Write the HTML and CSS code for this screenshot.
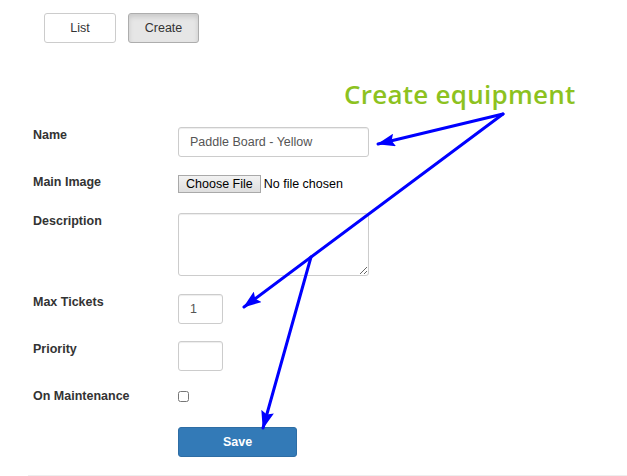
FILE: index.html
```html
<!DOCTYPE html>
<html>
<head>
<meta charset="utf-8">
<link rel="stylesheet" href="styles.css">
</head>
<body>
<div class="page">
  <div class="tabs">
    <button class="btn">List</button>
    <button class="btn btn-active">Create</button>
  </div>
  <form class="form">
    <div class="row row-name">
      <label class="lbl">Name</label>
      <input class="ctl ctl-wide" type="text" value="Paddle Board - Yellow">
    </div>
    <div class="row row-file">
      <label class="lbl">Main Image</label>
      <input class="file" type="file">
    </div>
    <div class="row row-desc">
      <label class="lbl">Description</label>
      <textarea class="ctl ctl-wide ctl-area"></textarea>
    </div>
    <div class="row row-max">
      <label class="lbl">Max Tickets</label>
      <input class="ctl ctl-small" type="text" value="1">
    </div>
    <div class="row row-prio">
      <label class="lbl">Priority</label>
      <input class="ctl ctl-small" type="text" value="">
    </div>
    <div class="row row-maint">
      <label class="lbl">On Maintenance</label>
      <input class="check" type="checkbox">
    </div>
    <div class="row row-save">
      <span class="lbl"></span>
      <button type="button" class="save">Save</button>
    </div>
  </form>
  <div class="rule"></div>
  <div class="title">Create equipment</div>
  <svg class="arrows" width="627" height="476" viewBox="0 0 627 476">
    <defs>
      <marker id="head" markerUnits="userSpaceOnUse" markerWidth="18" markerHeight="13" refX="17" refY="6.5" orient="auto">
        <path d="M0,0 L18,6.5 L0,13 L3,6.5 Z" fill="#0000ff"/>
      </marker>
    </defs>
    <g stroke="#0000ff" stroke-width="3" fill="none" stroke-linecap="round">
      <line x1="503" y1="114" x2="378" y2="144" marker-end="url(#head)"/>
      <line x1="503" y1="114" x2="244" y2="307" marker-end="url(#head)"/>
      <line x1="311" y1="257" x2="263" y2="428" marker-end="url(#head)"/>
    </g>
  </svg>
</div>
</body>
</html>
```

FILE: styles.css
```css
html, body {
  margin: 0;
  padding: 0;
  background: #fff;
}
body {
  font-family: "Liberation Sans", Arial, sans-serif;
  font-size: 12.5px;
  color: #333;
}
.page {
  position: relative;
  width: 627px;
  height: 476px;
  overflow: hidden;
  padding-left: 33px;
  box-sizing: border-box;
}
.tabs {
  display: flex;
  gap: 12px;
  padding: 13px 0 0 11px;
  margin-bottom: 84px;
}
.btn {
  font-family: "Liberation Sans", Arial, sans-serif;
  font-size: 12.5px;
  color: #333;
  background: #fff;
  border: 1px solid #ccc;
  border-radius: 3px;
  height: 30px;
  width: 72px;
  padding: 0;
}
.btn-active {
  width: 71px;
  background: #e6e6e6;
  border-color: #adadad;
  box-shadow: inset 0 3px 5px rgba(0,0,0,0.125);
}
.form {
  display: flex;
  flex-direction: column;
  margin: 0;
}
.row {
  display: flex;
  align-items: flex-start;
}
.lbl {
  width: 145px;
  flex: none;
  font-weight: bold;
  font-size: 12.5px;
  line-height: 17px;
  color: #333;
}
.row-name { margin-bottom: 17px; }
.row-file { margin-bottom: 20px; }
.row-desc { margin-bottom: 18px; }
.row-max { margin-bottom: 17px; }
.row-prio { margin-bottom: 17px; }
.row-maint { margin-bottom: 22px; }
.row-save { margin-bottom: 18px; }
.ctl {
  display: block;
  box-sizing: border-box;
  font-family: "Liberation Sans", Arial, sans-serif;
  font-size: 12.5px;
  color: #555;
  border: 1px solid #ccc;
  border-radius: 3px;
  padding: 0 11px;
  height: 30px;
  margin: 0;
  background: #fff;
  box-shadow: inset 0 1px 1px rgba(0,0,0,0.075);
  outline: none;
}
.ctl-wide { width: 191px; }
.ctl-small { width: 45px; }
.ctl-area {
  height: 63px;
  padding: 5px 11px;
  resize: both;
}
.file {
  font-family: "Liberation Sans", Arial, sans-serif;
  font-size: 12.5px;
  color: #000;
  margin: 1px 0 0 0;
  padding: 0;
  height: 18px;
}
.file::file-selector-button {
  font-family: "Liberation Sans", Arial, sans-serif;
  font-size: 12.5px;
  color: #000;
  background: linear-gradient(#f2f2f2, #dedede);
  border: 1px solid #a9a9a9;
  border-radius: 0;
  padding: 1px 7px;
  margin-right: 3px;
  height: 18px;
}
.check {
  width: 11px;
  height: 11px;
  margin: 3px 0 0 0;
}
.save {
  font-family: "Liberation Sans", Arial, sans-serif;
  font-size: 12.5px;
  font-weight: bold;
  color: #fff;
  background: #337ab7;
  border: 1px solid #2e6da4;
  border-radius: 3px;
  width: 119px;
  height: 30px;
  padding: 0;
}
.rule {
  margin-left: -5px;
  border-top: 1px solid #eee;
}
.title {
  position: absolute;
  left: 344px;
  top: 76px;
  font-family: "Open Sans", sans-serif;
  font-size: 26px;
  font-weight: 600;
  letter-spacing: 0.25px;
  color: #8dc21f;
  line-height: 36px;
  white-space: nowrap;
}
.arrows {
  position: absolute;
  left: 0;
  top: 0;
  pointer-events: none;
}
```
